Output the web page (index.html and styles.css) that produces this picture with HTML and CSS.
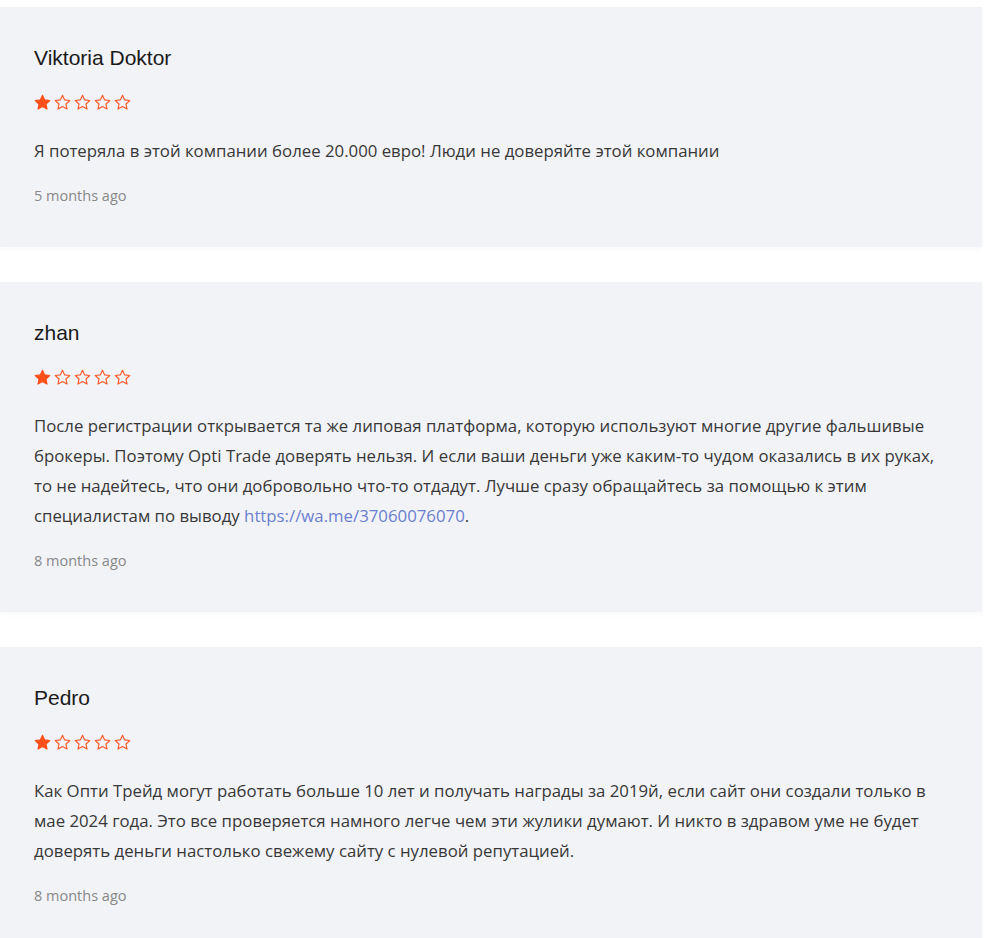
FILE: index.html
```html
<!DOCTYPE html>
<html lang="ru">

<head>
    <meta charset="UTF-8">
    <meta name="viewport" content="width=device-width, initial-scale=1.0">
    <title>Отзывы</title>
    <link rel="stylesheet" href="styles.css">
</head>

<body>
    <svg width="0" height="0" class="defs">
        <defs>
            <path id="star" d="M8 1.2l2.05 4.4 4.8.55-3.57 3.27.98 4.73L8 11.75l-4.26 2.4.98-4.73L1.15 6.15l4.8-.55z" />
        </defs>
    </svg>

    <div class="reviews">
        <div class="review">
            <h3 class="review-name">Viktoria Doktor</h3>
            <div class="stars">
                <svg class="star full" viewBox="0 0 16 16"><use href="#star" /></svg>
                <svg class="star" viewBox="0 0 16 16"><use href="#star" /></svg>
                <svg class="star" viewBox="0 0 16 16"><use href="#star" /></svg>
                <svg class="star" viewBox="0 0 16 16"><use href="#star" /></svg>
                <svg class="star" viewBox="0 0 16 16"><use href="#star" /></svg>
            </div>
            <p class="review-text">Я потеряла в этой компании более 20.000 евро! Люди не доверяйте этой компании</p>
            <span class="review-date">5 months ago</span>
        </div>

        <div class="review">
            <h3 class="review-name">zhan</h3>
            <div class="stars">
                <svg class="star full" viewBox="0 0 16 16"><use href="#star" /></svg>
                <svg class="star" viewBox="0 0 16 16"><use href="#star" /></svg>
                <svg class="star" viewBox="0 0 16 16"><use href="#star" /></svg>
                <svg class="star" viewBox="0 0 16 16"><use href="#star" /></svg>
                <svg class="star" viewBox="0 0 16 16"><use href="#star" /></svg>
            </div>
            <p class="review-text">После регистрации открывается та же липовая платформа, которую используют многие другие фальшивые брокеры. Поэтому Opti Trade доверять нельзя. И если ваши деньги уже каким-то чудом оказались в их руках, то не надейтесь, что они добровольно что-то отдадут. Лучше сразу обращайтесь за помощью к этим специалистам по выводу <a href="#">https://wa.me/37060076070</a>.</p>
            <span class="review-date">8 months ago</span>
        </div>

        <div class="review">
            <h3 class="review-name">Pedro</h3>
            <div class="stars">
                <svg class="star full" viewBox="0 0 16 16"><use href="#star" /></svg>
                <svg class="star" viewBox="0 0 16 16"><use href="#star" /></svg>
                <svg class="star" viewBox="0 0 16 16"><use href="#star" /></svg>
                <svg class="star" viewBox="0 0 16 16"><use href="#star" /></svg>
                <svg class="star" viewBox="0 0 16 16"><use href="#star" /></svg>
            </div>
            <p class="review-text">Как Опти Трейд могут работать больше 10 лет и получать награды за 2019й, если сайт они создали только в мае 2024 года. Это все проверяется намного легче чем эти жулики думают. И никто в здравом уме не будет доверять деньги настолько свежему сайту с нулевой репутацией.</p>
            <span class="review-date">8 months ago</span>
        </div>
    </div>
</body>

</html>
```

FILE: styles.css
```css
* {
    margin: 0;
    padding: 0;
    box-sizing: border-box;
}

body {
    background: #ffffff;
    font-family: 'Open Sans', sans-serif;
    color: #333;
}

.defs {
    position: absolute;
}

.reviews {
    display: flex;
    flex-direction: column;
    gap: 35px;
    padding-top: 7px;
    width: 982px;
}

.review {
    background: #f2f3f7;
    padding: 36px 34px 41px;
    box-shadow: 0 2px 6px rgba(0, 0, 0, 0.03);
}

.review-name {
    font-family: 'Liberation Sans', Arial, sans-serif;
    font-weight: normal;
    font-size: 21px;
    line-height: 30px;
    color: #1a1a1a;
}

.stars {
    display: flex;
    gap: 3px;
    margin-top: 21px;
    height: 17px;
}

.star {
    width: 17px;
    height: 17px;
    fill: none;
    stroke: #ff5a2c;
    stroke-width: 1.1;
    stroke-linejoin: round;
}

.star.full {
    fill: #ff4f1a;
    stroke: #ff4f1a;
}

.review-text {
    margin-top: 25px;
    font-size: 16.8px;
    line-height: 30px;
    color: #383838;
}

.review-text a {
    color: #6b7fd0;
    text-decoration: none;
}

.review-date {
    display: block;
    margin-top: 20px;
    font-size: 14.5px;
    line-height: 20px;
    color: #888;
}
```
